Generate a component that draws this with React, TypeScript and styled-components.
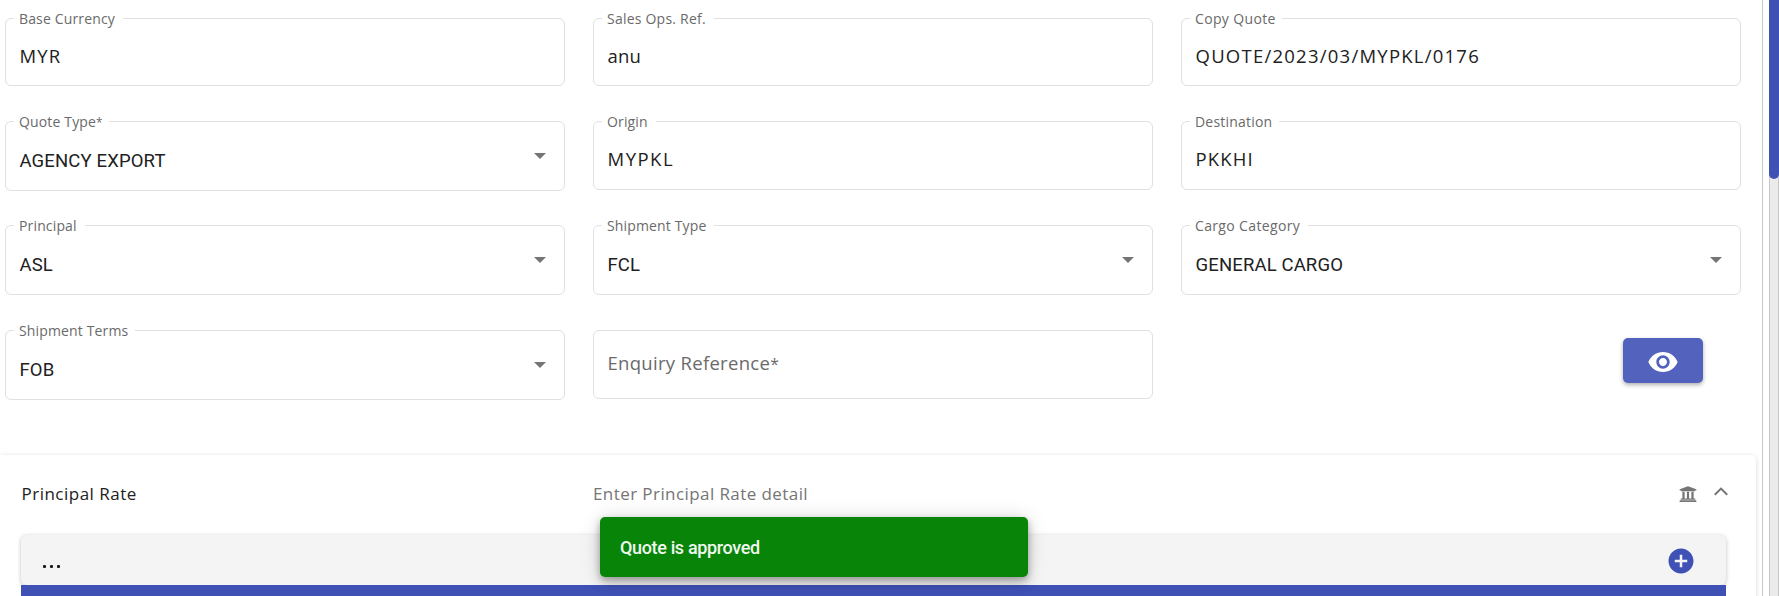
import React from "react";
import styled, { createGlobalStyle } from "styled-components";
import { FaUniversity } from "react-icons/fa";
import { MdVisibility, MdAddCircle } from "react-icons/md";

const GlobalStyle = createGlobalStyle`
  * { box-sizing: border-box; }
  body { margin: 0; background: #fff; overflow: hidden; font-family: "Open Sans", sans-serif; }
`;

const Page = styled.div`
  display: flex;
  width: 1779px;
  height: 596px;
  overflow: hidden;
  position: relative;
`;

const Content = styled.main`
  width: 1763px;
  border-right: 1px solid #c8c8c8;
  padding-top: 18px;
  overflow: hidden;
`;

const FormGrid = styled.div`
  display: grid;
  grid-template-columns: repeat(3, 560px);
  grid-template-rows: 103px 104px 105px 125px;
  column-gap: 28px;
  padding-left: 5px;
  align-items: start;
`;

const Outline = styled.div<{ $height: number }>`
  padding: 0 18px 0 8px;
  height: ${(p) => p.$height}px;
  border: 1px solid #e0e0e0;
  border-radius: 6px;
  display: flex;
  position: relative;
`;

const Legend = styled.span<{ $width: number; $spacing: number }>`
  position: absolute;
  top: -10px;
  left: 8px;
  width: ${(p) => p.$width + 12}px;
  height: 19px;
  padding-left: 5px;
  background: #fff;
  color: #6a6a6a;
  font-size: 14px;
  line-height: 19px;
  letter-spacing: ${(p) => p.$spacing}px;
  white-space: nowrap;
`;

const Value = styled.span<{ $roboto?: boolean; $muted?: boolean; $spacing: number }>`
  flex: 1;
  padding: ${(p) => (p.$roboto ? "26px" : p.$muted ? "19px" : "24px")} 0 0 5.5px;
  font-family: ${(p) => (p.$roboto ? "Roboto" : '"Open Sans"')}, sans-serif;
  font-size: 18.5px;
  line-height: 26px;
  letter-spacing: ${(p) => p.$spacing}px;
  color: ${(p) => (p.$muted ? "#6a6a6a" : "#212121")};
  white-space: nowrap;
`;

const Asterisk = styled.span`
  font-size: 0.85em;
`;

const Caret = styled.span`
  margin-top: 31px;
  width: 0;
  height: 0;
  border: 6px solid transparent;
  border-top-color: #757575;
  border-bottom: 0;
`;

const ActionCell = styled.div`
  display: flex;
  justify-content: flex-end;
  padding: 8px 38px 0 0;
`;

const ViewButton = styled.button`
  width: 80px;
  height: 45px;
  padding: 3px 0 0;
  display: flex;
  align-items: center;
  justify-content: center;
  border: 0;
  border-radius: 5px;
  background: #5262bd;
  color: #fff;
  font-size: 32px;
  box-shadow: 0 2px 4px rgba(0, 0, 0, 0.32);
`;

const RateCard = styled.section`
  width: 1756px;
  height: 160px;
  border-radius: 0 5px 0 0;
  box-shadow: 0 1px 5px rgba(0, 0, 0, 0.16);
  padding: 0 30px 0 21px;
`;

const CardHeader = styled.header`
  display: flex;
  align-items: center;
  height: 80px;
  padding-bottom: 3px;
  font-size: 17px;
  color: #757575;
`;

const CardTitle = styled.span`
  width: 572px;
  padding-left: 0.5px;
  color: #212121;
  letter-spacing: 0.49px;
`;

const CardHint = styled.span`
  flex: 1;
  letter-spacing: 0.42px;
`;

const HeaderIcons = styled.span`
  display: flex;
  align-items: flex-start;
  gap: 17px;
  margin-right: -2px;
`;

const Chevron = styled.svg`
  margin-top: 2px;
`;

const RateBar = styled.div`
  display: flex;
  align-items: center;
  justify-content: space-between;
  height: 50px;
  padding: 1px 30px 0 22px;
  background: #f4f4f4;
  border-radius: 6px;
  box-shadow: 0 1px 4px rgba(0, 0, 0, 0.25);
  color: #3f51b5;
`;

const Dots = styled.span`
  display: flex;
  gap: 4px;
  padding-top: 11px;
`;

const Dot = styled.i`
  width: 3px;
  height: 3px;
  border-radius: 1px;
  background: #1a1a1a;
`;

const TableHead = styled.div`
  position: relative;
  height: 30px;
  background: #3f51b5;
`;

const Gutter = styled.aside`
  margin-left: 6px;
  width: 10px;
  height: 596px;
  background: #ebebeb;
  border-left: 1px solid #c8c8c8;
  border-right: 1px solid #c8c8c8;
`;

const Thumb = styled.div`
  width: 10px;
  height: 179px;
  margin-left: -1px;
  background: #3f51b5;
  border-radius: 0 0 5px 5px;
`;

const Snackbar = styled.div`
  position: absolute;
  left: 600px;
  top: 517px;
  width: 428px;
  height: 60px;
  padding-left: 20px;
  border-radius: 5px;
  background: #088408;
  color: #f0f8f0;
  font: 500 18px/61px Roboto, sans-serif;
  letter-spacing: -0.35px;
  box-shadow: 0 3px 6px rgba(0, 0, 0, 0.2), 0 6px 12px rgba(0, 0, 0, 0.16), 0 1px 20px rgba(0, 0, 0, 0.14);
`;

type FieldProps = {
  label?: string;
  labelWidth?: number;
  labelSpacing?: number;
  value: string;
  height: number;
  select?: boolean;
  muted?: boolean;
  required?: boolean;
  spacing?: number;
};

const Field = ({
  label,
  labelWidth = 0,
  labelSpacing = 0.15,
  value,
  height,
  select,
  muted,
  required,
  spacing = select ? 0.14 : 0,
}: FieldProps) => (
  <Outline $height={height}>
    {label && (
      <Legend $width={labelWidth} $spacing={labelSpacing}>
        {label}
        {required && <Asterisk>*</Asterisk>}
      </Legend>
    )}
    <Value $roboto={select} $muted={muted} $spacing={spacing}>
      {value}
      {required && !label && <Asterisk>*</Asterisk>}
    </Value>
    {select && <Caret />}
  </Outline>
);

export default function App() {
  return (
    <Page>
      <GlobalStyle />
      <Content>
        <FormGrid>
          <Field label="Base Currency" labelWidth={97} value="MYR" height={68} spacing={1.1} />
          <Field label="Sales Ops. Ref." labelWidth={100} labelSpacing={0.22} value="anu" height={68} spacing={0.2} />
          <Field label="Copy Quote" labelWidth={80} labelSpacing={0.35} value="QUOTE/2023/03/MYPKL/0176" height={68} spacing={1.24} />
          <Field label="Quote Type" required labelWidth={83} value="AGENCY EXPORT" height={70} select />
          <Field label="Origin" labelWidth={42} value="MYPKL" height={69} spacing={1.5} />
          <Field label="Destination" labelWidth={77} labelSpacing={0.2} value="PKKHI" height={69} spacing={1.15} />
          <Field label="Principal" labelWidth={59} value="ASL" height={70} select />
          <Field label="Shipment Type" labelWidth={100} value="FCL" height={70} select />
          <Field label="Cargo Category" labelWidth={106} labelSpacing={0.35} value="GENERAL CARGO" height={70} select />
          <Field label="Shipment Terms" labelWidth={109} value="FOB" height={70} select />
          <Field value="Enquiry Reference" required height={69} muted spacing={0.3} />
          <ActionCell>
            <ViewButton aria-label="View enquiry"><MdVisibility /></ViewButton>
          </ActionCell>
        </FormGrid>
        <RateCard>
          <CardHeader>
            <CardTitle>Principal Rate</CardTitle>
            <CardHint>Enter Principal Rate detail</CardHint>
            <HeaderIcons>
              <FaUniversity size={18} />
              <Chevron width="14" height="9" viewBox="0 0 14 9" fill="none" stroke="#757575" strokeWidth="2">
                <path d="M.8 7.8 7 1.6l6.2 6.2" />
              </Chevron>
            </HeaderIcons>
          </CardHeader>
          <RateBar>
            <Dots><Dot /><Dot /><Dot /></Dots>
            <MdAddCircle size={30} />
          </RateBar>
          <TableHead />
        </RateCard>
      </Content>
      <Gutter><Thumb /></Gutter>
      <Snackbar role="status">Quote is approved</Snackbar>
    </Page>
  );
}
